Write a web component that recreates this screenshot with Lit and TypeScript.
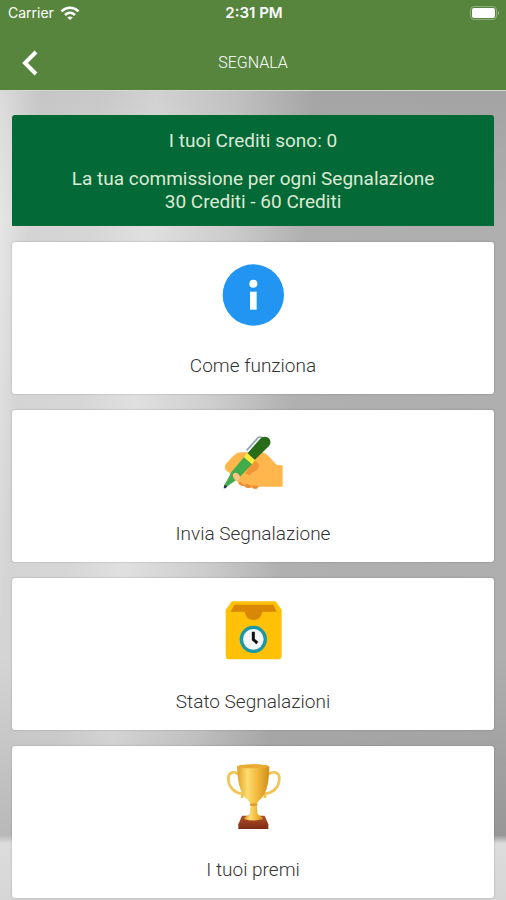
import { LitElement, html, css, svg } from "lit";
import { customElement } from "lit/decorators.js";

const infoIcon = svg`
  <svg class="icon" viewBox="0 -3 240 240" aria-hidden="true">
    <circle cx="121" cy="120" r="92" fill="#2294f2" />
    <circle cx="121" cy="86" r="12" fill="#fff" />
    <rect x="111" y="110" width="20" height="54" fill="#fff" />
  </svg>`;

const writeIcon = svg`
  <svg class="icon" viewBox="0 -9 240 240" aria-hidden="true">
    <path d="M36 130 C33 123 39 116 44 110 L64 90 C70 84 78 82 87 82 L146 82 C154 82 160 88 167 94 C180 106 188 121 198 121 L209 121 L209 185 L137 185 C131 194 121 193 117 186 C109 190 98 190 94 182 C86 184 77 180 76 172 L60 160 L48 142 C43 140 38 137 36 130 Z" fill="#ffb74d" />
    <path d="M96 146 L121 100 L137 118 C140 130 130 140 118 142 L111 151 Z" fill="#f29537" />
    <path d="M94 182 L98 176 L111 180 L117 186 C109 190 98 190 94 182 Z M117 186 L121 180 L137 185 C131 194 121 193 117 186 Z M76 172 L81 170 L92 178 L94 182 C86 184 78 181 76 172 Z" fill="#ee8c35" />
    <path d="M101 76 L135 38 C140 34 147 37 152 40" fill="none" stroke="#90a4ae" stroke-width="5" />
    <path d="M104 84 L141 42 C151 31 165 34 170 43 C174 50 173 57 168 63 L125 105 Z" fill="#286b18" />
    <path d="M94 95 L118 116 L77 160 L39 187 L34 181 L56 140 Z" fill="#42ab4b" />
    <path d="M101 85 L127 106 L117 118 L93 97 Z" fill="#ffeb3b" />
    <path d="M34 179 L43 184 L38 190 L32 190 Z" fill="#263a48" />
    <path d="M60 153 C58 145 65 141 71 144 C82 149 83 158 78 165 C72 170 61 164 60 153 Z" fill="#ffc282" />
  </svg>`;

const boxIcon = svg`
  <svg class="icon" viewBox="0 0 240 240" aria-hidden="true">
    <path d="M57 34 H188 L206 59 V197 Q206 208 195 208 H49 Q38 208 38 197 V59 Z" fill="#ffc107" />
    <path d="M64 44 H181 L191 65 H148 Q144 90 121 90 Q99 90 95 65 H53 Z" fill="#d98704" />
    <circle cx="121" cy="148" r="36" fill="#f3f6f8" stroke="#1b98a8" stroke-width="10" />
    <path d="M121 125 V149 L133 159" fill="none" stroke="#101010" stroke-width="9" />
  </svg>`;

const trophyIcon = svg`
  <svg class="icon" viewBox="0 9 240 240" aria-hidden="true">
    <defs>
      <linearGradient id="gold" x1="0" x2="1" y1="0" y2="0">
        <stop offset="0" stop-color="#e0a024" />
        <stop offset=".32" stop-color="#fddc70" />
        <stop offset=".6" stop-color="#f3bd41" />
        <stop offset="1" stop-color="#d08d18" />
      </linearGradient>
      <linearGradient id="wood" x1="0" x2="0" y1="0" y2="1">
        <stop offset="0" stop-color="#b2502d" />
        <stop offset="1" stop-color="#7d2a13" />
      </linearGradient>
    </defs>
    <path d="M77 58 C61 46 45 52 46 72 C47 97 65 114 88 116 L88 129 M166 58 C182 46 200 52 199 72 C198 97 180 114 156 116 L156 129" fill="none" stroke="#f3c351" stroke-width="8" />
    <path d="M87 182 H155 L166 208 V222 H76 V208 Z" fill="url(#wood)" />
    <path d="M114 139 H130 L134 177 C139 183 147 184 151 192 Q122 201 93 192 C97 184 105 183 110 177 Z" fill="url(#gold)" />
    <path d="M72 34 Q121 21 169 34 C168 80 163 111 146 129 C139 136 134 140 131 148 H113 C110 140 105 136 98 129 C80 111 74 80 72 34 Z" fill="url(#gold)" />
    <ellipse cx="121" cy="34" rx="48" ry="6" fill="#e8ac34" />
    <ellipse cx="122" cy="149" rx="12" ry="4" fill="#dda02a" />
  </svg>`;

const actions = [
  { icon: infoIcon, label: "Come funziona" },
  { icon: writeIcon, label: "Invia Segnalazione" },
  { icon: boxIcon, label: "Stato Segnalazioni" },
  { icon: trophyIcon, label: "I tuoi premi" },
];

@customElement("app-root")
export class AppRoot extends LitElement {
  static styles = css`
    :host {
      display: flex;
      flex-direction: column;
      min-height: 100vh;
      font-family: Roboto, sans-serif;
    }
    .top {
      background: #57853d;
      border-bottom: 1px solid #d5d9d2;
      color: #fff;
    }
    .status {
      display: grid;
      grid-template-columns: 1fr auto 1fr;
      align-items: center;
      height: 26px;
      padding: 0 6px 0 8px;
      font: 400 14px/26px Inter, sans-serif;
    }
    .carrier {
      display: flex;
      align-items: center;
      gap: 6px;
    }
    .time {
      font-size: 15px;
      font-weight: 600;
    }
    .battery {
      justify-self: end;
    }
    .nav {
      display: grid;
      grid-template-columns: 1fr auto 1fr;
      align-items: center;
      padding: 10px 16px 0;
      height: 54px;
    }
    .back {
      justify-self: start;
      display: flex;
      padding: 4px;
      border: 0;
      background: none;
      color: inherit;
    }
    .title {
      margin: 0;
      font-size: 16px;
      font-weight: 300;
      line-height: 24px;
    }
    .content {
      flex: 1;
      display: flex;
      flex-direction: column;
      gap: 16px;
      padding: 24px 12px 2px;
      background:
        linear-gradient(to bottom, transparent 92%, #dcdcdc 93%, #d6d6d6),
        linear-gradient(to bottom, #0001, transparent 16% 70%, #0002 92%),
        linear-gradient(94deg, #ebebeb, #d4d4d4 7%, #d6d6d6 18%, #e0e0e0 28%, #cdcdcd 42%, #b0b0b0 56%, #aeaeae);
    }
    .credits {
      padding: 14px 8px 13px;
      border-radius: 3px 3px 0 0;
      background: #036936;
      color: #dce9d5;
      text-align: center;
      font-size: 19px;
      font-weight: 400;
      line-height: 23px;
    }
    .credits p {
      margin: 0 0 15px;
    }
    .credits p:last-child {
      margin: 0;
    }
    .card {
      display: flex;
      flex-direction: column;
      align-items: center;
      gap: 20px;
      padding: 12px 8px 16px;
      border: 0;
      border-radius: 3px;
      background: #fff;
      box-shadow: 0 0 2px #0004;
      color: #333;
      font-family: inherit;
      font-size: 19px;
      font-weight: 300;
      line-height: 24px;
    }
    .icon {
      display: block;
      width: 80px;
      height: 80px;
    }
  `;

  render() {
    return html`
      <header class="top">
        <div class="status">
          <span class="carrier">
            Carrier
            <svg width="20" height="15" viewBox="0 0 20 15" fill="none" stroke="#fff" stroke-width="2.6" aria-label="Wi-Fi">
              <path d="M1.5 5.4 C6.5 .6 13.5 .6 18.5 5.4" />
              <path d="M5 9 C8 6.2 12 6.2 15 9" />
              <path d="M10 14 L7.2 11.4 Q10 9.4 12.8 11.4 Z" fill="#fff" stroke="none" />
            </svg>
          </span>
          <span class="time">2:31 PM</span>
          <svg class="battery" width="30" height="14" viewBox="0 0 30 14" aria-label="Battery">
            <rect x=".5" y=".5" width="26" height="13" rx="3.5" fill="none" stroke="#8fae7c" />
            <rect x="2" y="2" width="23" height="10" rx="2" fill="#fff" />
            <path d="M28 5 Q30 7 28 9 Z" fill="#a9c09b" />
          </svg>
        </div>
        <nav class="nav">
          <button class="back" aria-label="Indietro">
            <svg width="20" height="26" viewBox="0 0 20 26" fill="none" stroke="currentColor" stroke-width="4">
              <path d="M16 2 L5 13 L16 24" />
            </svg>
          </button>
          <h1 class="title">SEGNALA</h1>
        </nav>
      </header>
      <main class="content">
        <section class="credits">
          <p>I tuoi Crediti sono: 0</p>
          <p>La tua commissione per ogni Segnalazione<br />30 Crediti - 60 Crediti</p>
        </section>
        ${actions.map(
          (a) => html`<button class="card">${a.icon}<span>${a.label}</span></button>`
        )}
      </main>
    `;
  }
}
